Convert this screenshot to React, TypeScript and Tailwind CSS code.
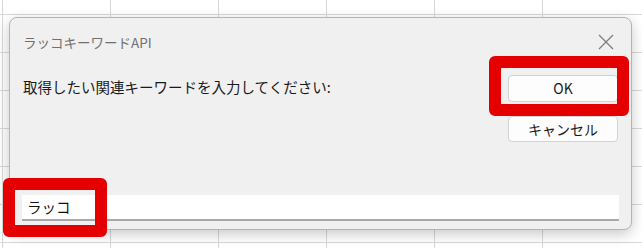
import React from "react";

const jp = "font-['Noto_Sans_CJK_JP','Noto_Sans',sans-serif]";

function CloseIcon() {
    return (
        <svg width="16" height="16" viewBox="0 0 16 16" className="text-[#7a7a7a]">
            <path d="M1 1 L15 15 M15 1 L1 15" stroke="currentColor" strokeWidth="1.2" fill="none" />
        </svg>
    );
}

export default function App() {
    return (
        <div
            className={`relative w-[642px] h-[248px] overflow-hidden bg-white bg-[linear-gradient(to_right,#d8d8d8_1px,transparent_1px),linear-gradient(to_bottom,#d8d8d8_1px,transparent_1px)] bg-[size:108px_38px] bg-[position:2px_14px] ${jp}`}
        >
            {/* input dialog */}
            <div className="ml-[9px] mt-[17px] w-[623px] h-[213px] rounded-[8px] border border-[#b4b4b4] bg-[#f0f0f0] shadow-[0_4px_14px_rgba(0,0,0,0.22)] flex flex-col">
                {/* title bar */}
                <div className="h-[46px] flex items-center justify-between pl-[13px] pr-[17px] pt-[2px]">
                    <span className="text-[13.5px] text-[#707070]">ラッコキーワードAPI</span>
                    <CloseIcon />
                </div>

                <div className="flex pl-[13px] pr-[13px]">
                    <div className="flex-1 pt-[13px] text-[14.5px] leading-[20px] text-[#1a1a1a]">
                        取得したい関連キーワードを入力してください:
                    </div>
                    <div className="flex flex-col gap-[15px] pt-[11px]">
                        <button className="w-[110px] h-[27px] rounded-[4px] border border-[#d2d2d2] bg-[#fdfdfd] text-[14px] text-[#1a1a1a] flex items-center justify-center">
                            OK
                        </button>
                        <button className="w-[110px] h-[26px] rounded-[4px] border border-[#d2d2d2] bg-[#fdfdfd] text-[14px] text-[#1a1a1a] flex items-center justify-center -mt-[1px]">
                            キャンセル
                        </button>
                    </div>
                </div>

                <div className="mt-auto mb-[8px] mx-[12px] h-[26px] bg-white border-b-2 border-[#a8a8a8] flex items-center pl-[5px] text-[14.5px] text-[#111]">
                    ラッコ
                </div>
            </div>

            {/* red highlight frames */}
            <div className="absolute left-[489px] top-[56px] w-[140px] h-[60px] border-[12px] border-[#e40000] rounded-[6px]" />
            <div className="absolute left-[3px] top-[178px] w-[104px] h-[59px] border-[12px] border-[#e40000] rounded-[6px]" />
        </div>
    );
}
